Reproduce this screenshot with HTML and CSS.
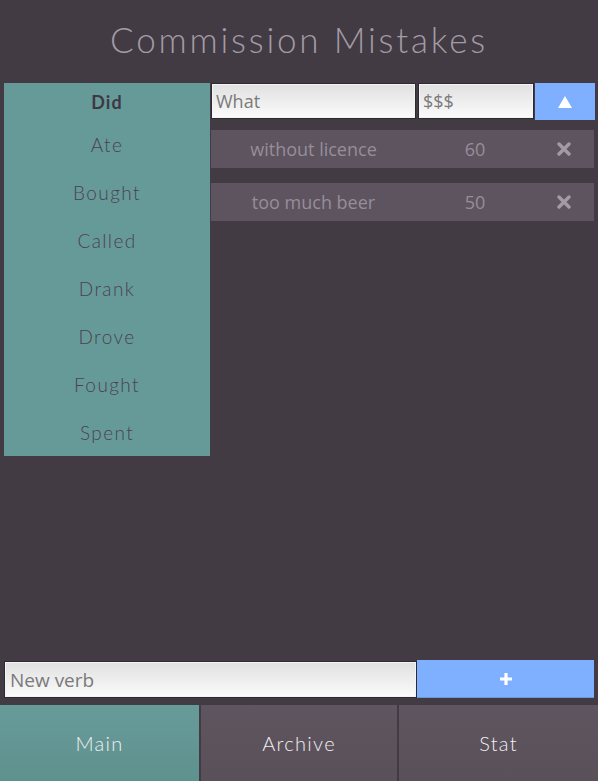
FILE: index.html
```html
<!DOCTYPE html>
<html>
<head>
<meta charset="utf-8">
<link rel="stylesheet" href="styles.css">
</head>
<body>
<div class="app">
  <h1 class="title">Commission Mistakes</h1>
  <div class="main">
    <ul class="verbs">
      <li class="verb active">Did</li>
      <li class="verb">Ate</li>
      <li class="verb">Bought</li>
      <li class="verb">Called</li>
      <li class="verb">Drank</li>
      <li class="verb">Drove</li>
      <li class="verb">Fought</li>
      <li class="verb">Spent</li>
    </ul>
    <div class="content">
      <div class="form-row">
        <input class="field what" type="text" placeholder="What">
        <input class="field cost" type="text" placeholder="$$$">
        <button class="btn-blue up"><svg width="16" height="14" viewBox="0 0 16 14"><polygon points="8,1 15,13 1,13" fill="#fff"/></svg></button>
      </div>
      <div class="item">
        <span class="item-what">without licence</span>
        <span class="item-cost">60</span>
        <span class="item-del"><svg width="14" height="14" viewBox="0 0 14 14"><path d="M2 2 L12 12 M12 2 L2 12" stroke="#a29ba6" stroke-width="3.4" stroke-linecap="round"/></svg></span>
      </div>
      <div class="item">
        <span class="item-what">too much beer</span>
        <span class="item-cost">50</span>
        <span class="item-del"><svg width="14" height="14" viewBox="0 0 14 14"><path d="M2 2 L12 12 M12 2 L2 12" stroke="#a29ba6" stroke-width="3.4" stroke-linecap="round"/></svg></span>
      </div>
    </div>
  </div>
  <div class="new-row">
    <input class="field newverb" type="text" placeholder="New verb">
    <button class="btn-blue add"><svg width="14" height="14" viewBox="0 0 14 14"><path d="M7 1 V13 M1 7 H13" stroke="#fff" stroke-width="3.2"/></svg></button>
  </div>
  <nav class="tabs">
    <div class="tab active">Main</div>
    <div class="tab">Archive</div>
    <div class="tab">Stat</div>
  </nav>
</div>
</body>
</html>
```
FILE: styles.css
```css
* { box-sizing: border-box; }
html, body {
  margin: 0;
  padding: 0;
  background: #423b43;
}
.app {
  width: 598px;
  height: 781px;
  display: flex;
  flex-direction: column;
  font-family: "Lato", "DejaVu Sans", sans-serif;
}
.title {
  margin: 0;
  height: 83px;
  padding-top: 18px;
  text-align: center;
  font-family: "Lato", sans-serif;
  font-weight: 300;
  font-size: 35px;
  letter-spacing: 2.8px;
  color: #a39ca6;
  line-height: 42px;
}
.main {
  flex: 1;
  display: flex;
  align-items: flex-start;
}
.verbs {
  list-style: none;
  margin: 0 0 0 4px;
  padding: 0;
  width: 206px;
  height: 373px;
  background: #669a99;
}
.verb {
  height: 48px;
  line-height: 48px;
  text-align: center;
  font-family: "Lato", sans-serif;
  font-weight: 300;
  font-size: 19px;
  letter-spacing: 1.4px;
  color: #4b4150;
}
.verb.active {
  height: 38px;
  line-height: 38px;
  font-weight: 700;
  font-size: 18px;
  letter-spacing: 1px;
  color: #3f3843;
}
.content {
  margin-left: 1px;
  width: 383px;
  display: flex;
  flex-direction: column;
}
.form-row {
  display: grid;
  grid-template-columns: 205px 116px 59px;
  column-gap: 2px;
  height: 37px;
}
.form-row .up { margin-left: -1px; width: 60px; }
.field {
  height: 36px;
  border: 1px solid #2e2a30;
  background: linear-gradient(#e0e0e0, #fbfbfb);
  font-family: "Open Sans", "Noto Sans", sans-serif;
  font-size: 18px;
  padding: 0 4px;
  color: #333;
  outline: none;
  box-shadow: inset 0 0 0 1px #f4f4f4;
}
.field::placeholder { color: #7a7a7a; }
.btn-blue {
  border: none;
  background: #7eb0ff;
  display: flex;
  align-items: center;
  justify-content: center;
  padding: 0;
}
.up { height: 37px; }
.item {
  margin-top: 10px;
  height: 38px;
  background: #5d545f;
  display: grid;
  grid-template-columns: 205px 116px 60px;
  column-gap: 1px;
  align-items: center;
  font-family: "Open Sans", "Noto Sans", sans-serif;
  font-size: 18px;
  color: #978d9a;
}
.item + .item { margin-top: 15px; }
.item span { text-align: center; }
.item-del { display: flex; justify-content: center; }
.new-row {
  display: flex;
  height: 38px;
  margin-bottom: 7px;
  padding-left: 4px;
}
.newverb {
  width: 413px;
  height: 37px;
  margin-top: 1px;
  font-size: 19px;
  padding-left: 5px;
}
.add {
  width: 177px;
  height: 38px;
  border-bottom: 1px solid #6a96d8;
}
.tabs {
  display: grid;
  grid-template-columns: 199px 196px 199px;
  column-gap: 2px;
  height: 76px;
}
.tab {
  display: flex;
  align-items: center;
  justify-content: center;
  background: linear-gradient(#5e5560, #595059);
  font-family: "Lato", sans-serif;
  font-weight: 300;
  font-size: 20px;
  letter-spacing: 1.3px;
  color: #f2f0f2;
}
.tab.active {
  background: linear-gradient(#679b99, #5f918e);
}
```
